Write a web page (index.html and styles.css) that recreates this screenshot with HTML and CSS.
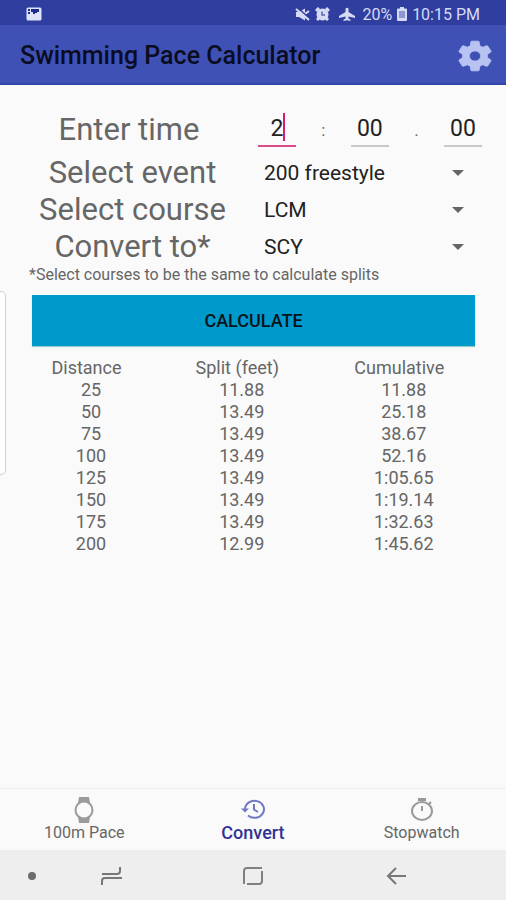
FILE: index.html
```html
<!DOCTYPE html>
<html lang="en">
<head>
<meta charset="utf-8">
<meta name="viewport" content="width=device-width, initial-scale=1">
<title>Swimming Pace Calculator</title>
<link rel="stylesheet" href="styles.css">
</head>
<body>
<div class="status">
  <svg class="status-photo" width="16" height="14" viewBox="0 0 16 14"><rect x="0.5" y="0.5" width="15" height="13" rx="1.5" fill="#dde3fb"/><path d="M2 2h2v2H2zM5 2h8v3h-2v1H9v1H7V5H5zM2 5h2v2H2z" fill="#202c8c"/></svg>
  <div class="status-right">
    <svg width="15" height="13" viewBox="0 0 15 13"><path d="M1 4h3l6-3.500v12L4 9H1z" fill="#d5daf5"/><path d="M10 6l4-3M10 8l4 3" stroke="#d5daf5" stroke-width="2"/><path d="M3 0l12 11" stroke="#303f9f" stroke-width="1.500"/><path d="M1 1l13 11" stroke="#d5daf5" stroke-width="2"/></svg>
    <svg class="alarm" width="15" height="14" viewBox="0 0 15 14"><circle cx="7.500" cy="7.500" r="6" fill="#d5daf5"/><path d="M1 4l3-3M14 4l-3-3M2 13l3-3M13 13l-3-3" stroke="#d5daf5" stroke-width="3"/><path d="M7 4.500v3.500h3" fill="none" stroke="#5a67b8" stroke-width="1.500"/></svg>
    <svg class="plane" width="16" height="14" viewBox="0 0 16 14"><path d="M6.500 1.500Q8 0 9.500 1.500V5l6.500 4v2L9.500 9.500v2l2 1.200V14L8 13.200 4.500 14v-1.300l2-1.200v-2L0 11V9l6.500-4z" fill="#d5daf5"/></svg>
    <span class="percent">20%</span>
    <svg class="battery" width="10" height="14" viewBox="0 0 10 14"><path d="M3 0h4v1.500h2q1 0 1 1V13q0 1-1 1H1q-1 0-1-1V2.500q0-1 1-1h2z" fill="#d5daf5"/><path d="M2 4h6v7H2z" fill="#8d97d2"/></svg>
    <span>10:15 PM</span>
  </div>
</div>
<header class="appbar">
  <h1>Swimming Pace Calculator</h1>
  <button class="settings" type="button" aria-label="Settings">
    <svg width="38" height="34" viewBox="1 1 22 22" preserveAspectRatio="none"><path fill="#b9c3f2" stroke="#b9c3f2" stroke-width="0.500" d="M19.140 12.940c.04-.3.060-.61.060-.94 0-.32-.02-.64-.07-.94l2.030-1.580c.18-.14.23-.41.120-.61l-1.920-3.320c-.12-.22-.37-.29-.59-.22l-2.390.96c-.5-.38-1.030-.7-1.620-.94l-.36-2.540c-.04-.24-.24-.41-.48-.41h-3.840c-.24 0-.43.17-.47.41l-.36 2.540c-.59.24-1.130.57-1.620.94l-2.390-.96c-.22-.08-.47 0-.59.22L2.740 8.870c-.12.21-.08.47.12.61l2.030 1.580c-.05.3-.09.63-.09.94s.02.64.07.94l-2.030 1.580c-.18.14-.23.41-.12.61l1.920 3.320c.12.22.37.29.59.22l2.390-.96c.5.38 1.030.7 1.620.94l.36 2.540c.05.24.24.41.48.41h3.840c.24 0 .44-.17.47-.41l.36-2.540c.59-.24 1.130-.56 1.620-.94l2.390.96c.22.08.47 0 .59-.22l1.920-3.320c.12-.22.07-.47-.12-.61l-2.010-1.580zM12 15.300c-1.820 0-3.300-1.480-3.300-3.300s1.480-3.300 3.300-3.300 3.300 1.480 3.300 3.300-1.480 3.300-3.300 3.300z"/></svg>
  </button>
</header>
<main class="content">
  <div class="edge-handle"></div>
  <form class="form">
    <div class="time-row">
      <label class="label" for="minutes">Enter time</label>
      <div class="fields">
        <span class="field active"><input id="minutes" type="text" inputmode="numeric" value="2"><span class="caret"></span></span>
        <span class="sep">:</span>
        <span class="field"><input type="text" inputmode="numeric" value="00" aria-label="Seconds"></span>
        <span class="sep">.</span>
        <span class="field"><input type="text" inputmode="numeric" value="00" aria-label="Hundredths"></span>
      </div>
    </div>
    <div class="select-row">
      <label class="label" for="event">Select event</label>
      <div class="select"><select id="event"><option>200 freestyle</option></select></div>
    </div>
    <div class="select-row">
      <label class="label" for="course">Select course</label>
      <div class="select"><select id="course"><option>LCM</option></select></div>
    </div>
    <div class="select-row">
      <label class="label" for="target">Convert to*</label>
      <div class="select"><select id="target"><option>SCY</option></select></div>
    </div>
    <p class="note">*Select courses to be the same to calculate splits</p>
    <button class="calculate" type="button">CALCULATE</button>
  </form>
  <table class="splits">
    <thead><tr><th>Distance</th><th>Split (feet)</th><th>Cumulative</th></tr></thead>
    <tbody>
      <tr><td>25</td><td>11.88</td><td>11.88</td></tr>
      <tr><td>50</td><td>13.49</td><td>25.18</td></tr>
      <tr><td>75</td><td>13.49</td><td>38.67</td></tr>
      <tr><td>100</td><td>13.49</td><td>52.16</td></tr>
      <tr><td>125</td><td>13.49</td><td>1:05.65</td></tr>
      <tr><td>150</td><td>13.49</td><td>1:19.14</td></tr>
      <tr><td>175</td><td>13.49</td><td>1:32.63</td></tr>
      <tr><td>200</td><td>12.99</td><td>1:45.62</td></tr>
    </tbody>
  </table>
</main>
<nav class="tabs">
  <a href="#pace">
    <svg width="22" height="26" viewBox="0 0 22 26"><path d="M6 0h10l1 6H5zM5 20h12l-1 6H6z" fill="#9b9b9b"/><circle cx="11" cy="13" r="8.500" fill="#fafafa" stroke="#9b9b9b" stroke-width="2"/></svg>
    <span>100m Pace</span>
  </a>
  <a class="current" href="#convert">
    <svg width="26" height="26" viewBox="0 0 26 26" fill="none" stroke="#7078c4" stroke-width="2"><path d="M5 12A9.500 8.500 0 1 1 8 18.500"/><path d="M1 11.500h8l-4 4z" fill="#7078c4" stroke="none"/><path d="M14 7v5.500l4 2.500"/></svg>
    <span>Convert</span>
  </a>
  <a href="#stopwatch">
    <svg width="24" height="26" viewBox="0 0 24 26" fill="none" stroke="#999"><path d="M8 2.500h8" stroke-width="3"/><path d="M12 9v5M19 7l2-2" stroke-width="2"/><ellipse cx="12" cy="14" rx="10" ry="9" stroke-width="2"/></svg>
    <span>Stopwatch</span>
  </a>
</nav>
<div class="system">
  <button type="button" aria-label="Hide bar"><svg width="8" height="8" viewBox="0 0 8 8"><circle cx="4" cy="4" r="4" fill="#6c6c6c"/></svg></button>
  <button type="button" aria-label="Recent apps"><svg width="22" height="20" viewBox="0 0 22 20" fill="none" stroke="#777" stroke-width="2"><path d="M1 8h15q3 0 3-3V1M21 12H4q-3 0-3 3v4"/></svg></button>
  <button type="button" aria-label="Home"><svg width="22" height="18" viewBox="0 0 22 18" fill="none" stroke="#808080" stroke-width="2"><path d="M2 17V4q0-3 3-3h15M20 4v10q0 3-3 3H5"/></svg></button>
  <button type="button" aria-label="Back"><svg width="20" height="18" viewBox="0 0 20 18" fill="none" stroke="#777" stroke-width="2"><path d="M20 9H2M10 1L2 9l8 8"/></svg></button>
</div>
</body>
</html>
```
FILE: styles.css
```css
* { box-sizing: border-box; }
body {
  margin: 0;
  min-height: 100vh;
  display: flex;
  flex-direction: column;
  background: #fafafa;
  color: #666;
  font-family: Roboto, "Liberation Sans", sans-serif;
  font-size: 17px;
}
button, input, select { font: inherit; border: 0; background: none; padding: 0; margin: 0; border-radius: 0; }
svg { display: block; }

.status {
  height: 25px;
  padding: 3px 26px 0;
  display: flex;
  align-items: center;
  justify-content: space-between;
  background: #303f9f;
  color: #d5daf5;
  font-size: 16px;
}
.status-right { display: flex; align-items: center; }
.alarm { margin-left: 5px; }
.plane { margin-left: 9px; }
.percent { margin-left: 7px; }
.battery { margin: 0 5px; }

.appbar {
  height: 60px;
  padding: 4px 12px 0 20px;
  display: flex;
  align-items: center;
  justify-content: space-between;
  background: #3f51b5;
  border-bottom: 2px solid #3345ad;
}
h1 { margin: 0; font-size: 25px; line-height: 30px; font-weight: 500; color: #0a0d22; }

.content { flex: 1; position: relative; padding-top: 20px; }
.edge-handle {
  position: absolute;
  left: 0;
  top: 206px;
  width: 6px;
  height: 184px;
  background: #fff;
  border: 1px solid #d0d0d0;
  border-left: 0;
  border-radius: 0 5px 5px 0;
}
.label { text-align: center; font-size: 31px; line-height: 37px; }
.time-row {
  display: grid;
  grid-template-columns: 258fr 224fr;
  align-items: center;
  height: 49px;
  padding-right: 24px;
}
.fields { display: flex; align-items: center; justify-content: space-between; }
.field { position: relative; width: 38px; border-bottom: 2px solid #c8c8c8; }
.field input { display: block; width: 100%; height: 32px; text-align: center; font-size: 23px; color: #222; outline: 0; }
.field.active { border-color: #dc4b8b; }
.caret { position: absolute; left: 25px; top: 0; width: 2px; height: 28px; background: #d81b70; }
.sep { font-size: 17px; }

.select-row { display: grid; grid-template-columns: 201fr 242fr; padding: 0 31px 0 32px; }
.select { position: relative; padding-left: 31px; }
.select select { appearance: none; display: block; width: 100%; height: 37px; font-size: 21px; color: #222; }
.select::after {
  content: "";
  position: absolute;
  right: 11px;
  top: 16px;
  border: 6px solid transparent;
  border-top-color: #666;
  border-bottom: 0;
  pointer-events: none;
}
.note { margin: 0 0 10px 29px; font-size: 16px; line-height: 20px; }
.calculate {
  display: block;
  width: calc(100% - 63px);
  height: 51px;
  margin-left: 32px;
  background: #0099cc;
  box-shadow: 0 1px 1px #9cc;
  color: #0a1418;
  font-size: 18px;
  font-weight: 500;
}

.splits {
  width: calc(100% - 56px);
  margin: 11px 28px 0;
  table-layout: fixed;
  border-collapse: collapse;
  font-size: 18px;
  line-height: 22px;
  text-align: center;
}
.splits th { font-weight: 400; padding: 0 9px 0 0; width: 28%; }
.splits th:nth-child(2) { width: 39%; }
.splits th:nth-child(3) { width: 33%; }
.splits td { padding: 0; }

.tabs { height: 62px; display: grid; grid-template-columns: repeat(3, 1fr); border-top: 1px solid #eee; }
.tabs a {
  display: flex;
  flex-direction: column;
  align-items: center;
  padding-top: 8px;
  color: #666;
  text-decoration: none;
  font-size: 16px;
  line-height: 20px;
}
.tabs .current { color: #303394; font-size: 18px; font-weight: 500; }

.system { height: 50px; display: grid; grid-template-columns: 64fr 96fr 186fr 100fr 60fr; background: #eee; }
.system button { display: flex; align-items: center; justify-content: center; padding-top: 2px; }
```
